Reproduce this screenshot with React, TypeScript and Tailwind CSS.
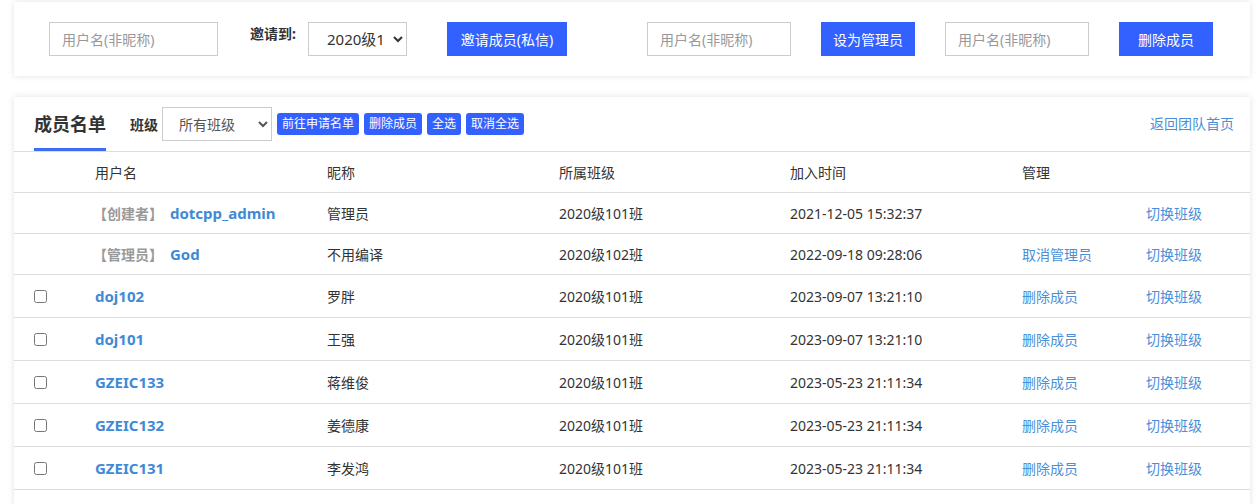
import React from "react";

const font = { fontFamily: '"Noto Sans", "Noto Sans CJK SC", sans-serif' };

const rows = [
  { tag: "【创建者】", name: "dotcpp_admin", nick: "管理员", cls: "2020级101班", time: "2021-12-05 15:32:37", manage: "", check: false },
  { tag: "【管理员】", name: "God", nick: "不用编译", cls: "2020级102班", time: "2022-09-18 09:28:06", manage: "取消管理员", check: false },
  { tag: "", name: "doj102", nick: "罗胖", cls: "2020级101班", time: "2023-09-07 13:21:10", manage: "删除成员", check: true },
  { tag: "", name: "doj101", nick: "王强", cls: "2020级101班", time: "2023-09-07 13:21:10", manage: "删除成员", check: true },
  { tag: "", name: "GZEIC133", nick: "蒋维俊", cls: "2020级101班", time: "2023-05-23 21:11:34", manage: "删除成员", check: true },
  { tag: "", name: "GZEIC132", nick: "姜德康", cls: "2020级101班", time: "2023-05-23 21:11:34", manage: "删除成员", check: true },
  { tag: "", name: "GZEIC131", nick: "李发鸿", cls: "2020级101班", time: "2023-05-23 21:11:34", manage: "删除成员", check: true },
];

const cols = "grid grid-cols-[81px_232px_232px_231px_232px_124px_1fr] items-center";

const App = () => {
  return (
    <div className="min-h-screen bg-white pl-[14px] pr-[10px] pt-[2px] text-[14px] text-[#333]" style={font}>
      {/* invite / admin / delete bar */}
      <section className="flex h-[74px] items-center bg-white pl-[35px] shadow-[0_0_6px_rgba(0,0,0,0.12)]">
        <input
          className="h-[34px] w-[169px] border border-[#ccc] px-3 text-[14px] placeholder:text-[#999] outline-none"
          placeholder="用户名(非昵称)"
        />
        <span className="ml-[32px] -mt-[12px] w-[58px] shrink-0 font-bold text-[#333]">邀请到:</span>
        <select className="h-[34px] w-[99px] border border-[#ccc] bg-white pl-[14px] pr-[8px] text-[15px] text-[#333]">
          <option>2020级101班</option>
          <option>2020级102班</option>
        </select>
        <button className="ml-[40px] h-[34px] w-[120px] bg-[#3361ff] text-[14px] text-white">邀请成员(私信)</button>
        <input
          className="ml-[80px] h-[34px] w-[144px] border border-[#ccc] px-3 text-[14px] placeholder:text-[#999] outline-none"
          placeholder="用户名(非昵称)"
        />
        <button className="ml-[30px] h-[34px] w-[94px] bg-[#3361ff] text-[14px] text-white">设为管理员</button>
        <input
          className="ml-[30px] h-[34px] w-[144px] border border-[#ccc] px-3 text-[14px] placeholder:text-[#999] outline-none"
          placeholder="用户名(非昵称)"
        />
        <button className="ml-[30px] h-[34px] w-[94px] bg-[#3361ff] text-[14px] text-white">删除成员</button>
      </section>

      {/* member list */}
      <section className="mt-[21px] bg-white pb-[24px] shadow-[0_0_6px_rgba(0,0,0,0.12)]">
        <header className="flex h-[55px] items-stretch border-b border-[#ddd] pl-[20px] pr-[16px]">
          <div className="flex items-center border-b-[3px] border-[#3d6df2] pt-[3px] text-[18px] font-bold text-[#333]">
            成员名单
          </div>
          <div className="ml-[24px] flex items-center">
            <span className="font-bold">班级</span>
            <select className="ml-[4px] h-[34px] w-[110px] border border-[#ccc] bg-white pl-3 text-[14px] text-[#555]">
              <option>所有班级</option>
            </select>
            <div className="ml-[5px] flex gap-[5px]">
              {["前往申请名单", "删除成员", "全选", "取消全选"].map((b) => (
                <button key={b} className="h-[22px] rounded-[3px] bg-[#3361ff] px-[5px] text-[12px] leading-[22px] text-white">
                  {b}
                </button>
              ))}
            </div>
          </div>
          <a className="ml-auto flex items-center pb-[2px] text-[#4a8fd8]">返回团队首页</a>
        </header>

        <div className={`${cols} h-[41px] border-b border-[#ddd]`}>
          <span />
          <span>用户名</span>
          <span>昵称</span>
          <span>所属班级</span>
          <span>加入时间</span>
          <span>管理</span>
          <span />
        </div>

        {rows.map((r) => (
          <div key={r.name} className={`${cols} ${r.check ? "h-[43px]" : "h-[41px]"} border-b border-[#ddd]`}>
            <span className="pl-[20px]">
              {r.check && <input type="checkbox" className="block h-[13px] w-[13px]" />}
            </span>
            <span className="flex items-center">
              {r.tag && <span className="-ml-[2px] mr-[7px] font-bold text-[#999]">{r.tag}</span>}
              <a className="text-[15px] font-bold text-[#3f8ad6]">{r.name}</a>
            </span>
            <span>{r.nick}</span>
            <span>{r.cls}</span>
            <span>{r.time}</span>
            <a className="text-[#4a8fd8]">{r.manage}</a>
            <a className="text-[#4a8fd8]">切换班级</a>
          </div>
        ))}
      </section>
    </div>
  );
};

export default App;
